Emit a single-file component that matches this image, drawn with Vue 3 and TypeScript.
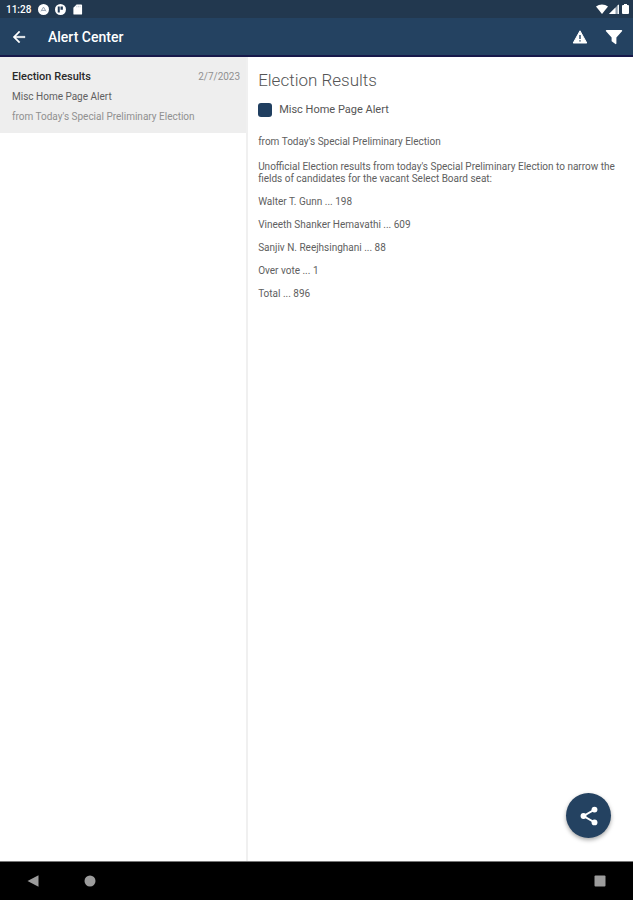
<script setup lang="ts">
interface AlertItem {
  id: number
  title: string
  date: string
  category: string
  summary: string
  intro: string
  results: string[]
}

const alerts: AlertItem[] = [
  {
    id: 1,
    title: 'Election Results',
    date: '2/7/2023',
    category: 'Misc Home Page Alert',
    summary: "from Today's Special Preliminary Election",
    intro:
      "Unofficial Election results from today's Special Preliminary Election to narrow the fields of candidates for the vacant Select Board seat:",
    results: [
      'Walter T. Gunn ... 198',
      'Vineeth Shanker Hemavathi ... 609',
      'Sanjiv N. Reejhsinghani ... 88',
      'Over vote ... 1',
      'Total ... 896',
    ],
  },
]

const selected = alerts[0]
</script>

<template>
  <div class="screen">
    <div class="status">
      <span class="clock">11:28</span>
      <svg class="status-icon" viewBox="0 0 12 12">
        <circle cx="6" cy="6" r="6" fill="#fff" />
        <path d="M3.2 8 6 3.4 8.800 8M4.400 7h3.200" fill="none" stroke="#8b98a8" stroke-width="1" />
      </svg>
      <svg class="status-icon" viewBox="0 0 12 12">
        <circle cx="6" cy="6" r="6" fill="#fff" />
        <path d="M3 2.800h2.200v6.600H3zM6 2.800h2.600v3.600H6z" fill="#223b56" />
      </svg>
      <svg class="status-icon" viewBox="0 0 12 12">
        <path d="M5 .5h5a1 1 0 0 1 1 1v9a1 1 0 0 1-1 1H2.500a1 1 0 0 1-1-1V4z" fill="#fff" />
        <path d="M5.200 2v1.600M7 2v1.600M8.800 2v1.600" stroke="#a9b4c0" stroke-width=".7" />
      </svg>
      <div class="signals">
        <svg width="12" height="10" viewBox="0 0 12 10">
          <path d="M0 2.600C3.400-.2 8.600-.2 12 2.600L6 10z" fill="#fff" />
        </svg>
        <svg width="10" height="10" viewBox="0 0 10 10">
          <path d="M10 0v10H0z" fill="#8e9baa" />
          <path d="M6.500 3.500V10H0z" fill="#fff" />
          <path d="M9.300 1v9" stroke="#fff" stroke-width="1.200" />
        </svg>
        <svg class="battery" width="7" height="10" viewBox="0 0 7 10">
          <path d="M2 0h3v1h1a1 1 0 0 1 1 1v7a1 1 0 0 1-1 1H1a1 1 0 0 1-1-1V2a1 1 0 0 1 1-1h1z" fill="#fff" />
        </svg>
      </div>
    </div>

    <header class="app-bar">
      <button class="icon-button" type="button" aria-label="Back">
        <svg width="18" height="18" viewBox="0 0 24 24">
          <path d="M20 11H7.830l5.590-5.590L12 4l-8 8 8 8 1.410-1.410L7.830 13H20z" fill="#fff" stroke="#fff" stroke-width=".5" />
        </svg>
      </button>
      <h1>Alert Center</h1>
      <button class="icon-button" type="button" aria-label="Alerts">
        <svg width="16" height="16" viewBox="0 0 16 16">
          <path d="M8 1.800 14.800 14H1.200z" fill="#fff" stroke="#fff" stroke-width="1" stroke-linejoin="round" />
          <path d="M7.300 6h1.400v4H7.300zM7.300 11.200h1.400v1.400H7.300z" fill="#244261" />
        </svg>
      </button>
      <button class="icon-button" type="button" aria-label="Filter">
        <svg width="18" height="16" viewBox="0 0 18 16">
          <path d="M1.500 1h15a.7.7 0 0 1 .5 1.200L11.400 8.400V14.600a.6.6 0 0 1-1 .4L7 12.500a1 1 0 0 1-.4-.8V8.400L1 2.200A.7.7 0 0 1 1.500 1z" fill="#fff" />
        </svg>
      </button>
    </header>

    <main class="panes">
      <nav class="list">
        <a v-for="alert in alerts" :key="alert.id" class="item" href="#">
          <span class="item-head">
            <strong>{{ alert.title }}</strong>
            <span class="date">{{ alert.date }}</span>
          </span>
          <span class="category">{{ alert.category }}</span>
          <span class="summary">{{ alert.summary }}</span>
        </a>
      </nav>

      <article class="detail">
        <h2>{{ selected.title }}</h2>
        <div class="tag"><span class="swatch"></span>{{ selected.category }}</div>
        <p class="lead">{{ selected.summary }}</p>
        <p>{{ selected.intro }}</p>
        <p v-for="line in selected.results" :key="line">{{ line }}</p>
      </article>

      <button class="share" type="button" aria-label="Share">
        <svg width="22" height="22" viewBox="0 0 24 24">
          <path d="M18 5 6 12l12 7" fill="none" stroke="#fff" stroke-width="2" />
          <g fill="#fff">
            <circle cx="18" cy="5" r="3.200" />
            <circle cx="6" cy="12" r="3.200" />
            <circle cx="18" cy="19" r="3.200" />
          </g>
        </svg>
      </button>
    </main>

    <footer class="nav-bar">
      <button class="icon-button" type="button" aria-label="Go back">
        <svg width="12" height="12" viewBox="0 0 12 12"><path d="M11.500.3v11.400L.5 6z" fill="#9c9c9c" /></svg>
      </button>
      <button class="icon-button" type="button" aria-label="Home">
        <svg width="12" height="12" viewBox="0 0 12 12"><circle cx="6" cy="6" r="5.500" fill="#9c9c9c" /></svg>
      </button>
      <button class="icon-button recents" type="button" aria-label="Recent apps">
        <svg width="12" height="12" viewBox="0 0 12 12"><rect x=".5" y=".5" width="11" height="11" rx="1" fill="#9c9c9c" /></svg>
      </button>
    </footer>
  </div>
</template>

<style>
body {
  margin: 0;
}
</style>

<style scoped>
.screen {
  display: flex;
  flex-direction: column;
  min-height: 100vh;
  background: #fff;
  color: #555;
  font-family: Roboto, "Liberation Sans", sans-serif;
}

svg {
  display: block;
}

button {
  padding: 0;
  border: 0;
  background: none;
  cursor: pointer;
}

.status {
  display: flex;
  align-items: center;
  gap: 6px;
  height: 18px;
  padding: 0 4px 0 6px;
  background: #22384f;
  color: #fff;
}

.clock {
  margin-right: 1px;
  font-size: 10px;
  font-weight: 500;
}

.status-icon {
  width: 11px;
  height: 11px;
}

.signals {
  display: flex;
  gap: 1px;
  margin-left: auto;
}

.battery {
  margin-left: 2px;
}

.app-bar {
  display: flex;
  align-items: center;
  height: 37px;
  padding: 0 8px;
  border-bottom: 2px solid #17194a;
  background: #244261;
  color: #fff;
}

.icon-button {
  display: grid;
  place-items: center;
  width: 22px;
  height: 32px;
}

.app-bar .icon-button + .icon-button {
  margin-left: 12px;
}

h1 {
  flex: 1;
  margin: 0 0 0 18px;
  font-size: 14px;
  font-weight: 500;
}

.panes {
  position: relative;
  display: flex;
  flex: 1;
}

.list {
  box-sizing: border-box;
  width: 39.200%;
  border-right: 2px solid #f0f0f0;
}

.item {
  display: flex;
  flex-direction: column;
  gap: 4px;
  padding: 12px 6px 8px 12px;
  background: #eee;
  color: #606060;
  font-size: 10px;
  line-height: 16px;
  text-decoration: none;
}

.item-head {
  display: flex;
  justify-content: space-between;
}

.item strong {
  color: #2a2a2a;
  font-size: 11px;
  font-weight: 500;
}

.date,
.summary {
  color: #909090;
}

.detail {
  flex: 1;
  padding: 11px 10px;
}

h2 {
  margin: 0;
  color: #555;
  font-size: 17px;
  font-weight: 300;
  line-height: 24px;
}

.tag {
  display: flex;
  align-items: center;
  gap: 7px;
  margin: 10px 0 18px;
  font-size: 11px;
  line-height: 16px;
}

.swatch {
  width: 14px;
  height: 14px;
  border-radius: 3px;
  background: #203f60;
}

p {
  margin: 0 0 11px;
  color: #606060;
  font-size: 10px;
  line-height: 12px;
}

.lead {
  margin-bottom: 13px;
}

.share {
  position: absolute;
  right: 22px;
  bottom: 23px;
  display: grid;
  place-items: center;
  width: 45px;
  height: 45px;
  border-radius: 50%;
  background: #244261;
  box-shadow: 0 2px 4px rgba(0, 0, 0, 0.35);
}

.nav-bar {
  display: flex;
  align-items: center;
  height: 38px;
  padding: 0 22px;
  border-top: 1px solid #777;
  background: #000;
}

.nav-bar .icon-button + .icon-button {
  margin-left: 35px;
}

.nav-bar .icon-button.recents {
  margin-left: auto;
}
</style>
